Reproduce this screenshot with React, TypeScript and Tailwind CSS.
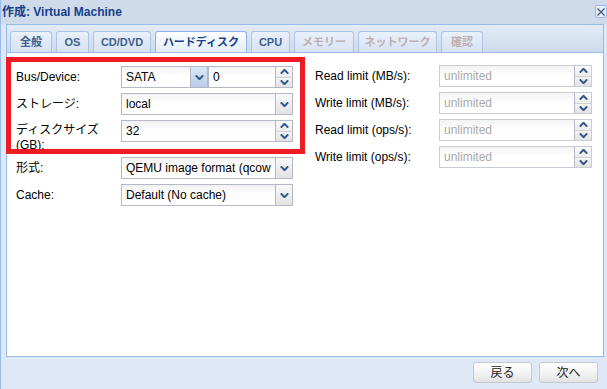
import type { ReactNode } from 'react';

const tabs = [
  { label: '全般', w: 'w-[42px]' },
  { label: 'OS', w: 'w-[33px]' },
  { label: 'CD/DVD', w: 'w-[58px]' },
  { label: 'ハードディスク', w: 'w-[92px]', active: true },
  { label: 'CPU', w: 'w-[39px]' },
  { label: 'メモリー', w: 'w-[60px]', disabled: true },
  { label: 'ネットワーク', w: 'w-[79px]', disabled: true },
  { label: '確認', w: 'w-[42px]', disabled: true },
];

const limits = ['Read limit (MB/s):', 'Write limit (MB/s):', 'Read limit (ops/s):', 'Write limit (ops/s):'];

function Chevron({ up = false }: { up?: boolean }) {
  return (
    <svg width="9" height="5" viewBox="0 0 9 5" className={up ? 'rotate-180' : ''}>
      <path d="M0.8 0.4 L4.5 4.2 L8.2 0.4" fill="none" stroke="#34548a" strokeWidth="2" />
    </svg>
  );
}

function Trigger({ hover = false }: { hover?: boolean }) {
  return (
    <div
      className={`w-[17px] shrink-0 flex items-center justify-center border-l border-[#b5b8c8] bg-gradient-to-b ${
        hover ? 'from-[#dce8f6] to-[#b7cce7]' : 'from-[#fafafa] to-[#e2e2e2]'
      }`}
    >
      <Chevron />
    </div>
  );
}

function Spin() {
  return (
    <div className="w-[17px] shrink-0 flex flex-col border-l border-[#b5b8c8]">
      <div className="flex-1 flex items-center justify-center bg-gradient-to-b from-[#fafafa] to-[#ececec] border-b border-[#d4d4d4]">
        <Chevron up />
      </div>
      <div className="flex-1 flex items-center justify-center bg-gradient-to-b from-[#f4f4f4] to-[#e2e2e2]">
        <Chevron />
      </div>
    </div>
  );
}

function Field({ children, w, muted = false, tail }: { children: ReactNode; w: string; muted?: boolean; tail: ReactNode }) {
  return (
    <div className={`${w} h-[22px] flex border ${muted ? 'border-[#c9cbd6]' : 'border-[#b5b8c8]'} bg-white shrink-0`}>
      <div
        className={`flex-1 min-w-0 overflow-hidden whitespace-nowrap pl-[4px] text-[12px] leading-[20px] bg-gradient-to-b from-[#f3f3f3] via-white to-white ${
          muted ? 'text-[#a9a9a9]' : 'text-black'
        }`}
      >
        {children}
      </div>
      {tail}
    </div>
  );
}

function Row({ label, children }: { label: ReactNode; children: ReactNode }) {
  return (
    <div className="flex items-center h-[22px] mb-[5px]">
      <div className="w-[105px] shrink-0 text-[12px] text-black">{label}</div>
      {children}
    </div>
  );
}

export default function App() {
  return (
    <div className="relative w-[607px] h-[389px] overflow-hidden bg-[#dfe8f6] border-l border-[#99bbe8] font-['Liberation_Sans','Noto_Sans_CJK_JP',sans-serif]">
      <div className="h-[24px] flex items-center justify-between pl-[1px] bg-[#cfdbea]">
        <span className="text-[12px] font-bold text-[#15428b]">作成: Virtual Machine</span>
        <div className="w-[12px] h-[13px] mb-[1px] flex items-center justify-center border border-[#99bbe8] bg-[#e6eef8] rounded-[2px]">
          <svg width="8" height="8" viewBox="0 0 8 8">
            <path d="M0.5 0.5 L7.5 7.5 M7.5 0.5 L0.5 7.5" stroke="#3b5a86" strokeWidth="1.3" />
          </svg>
        </div>
      </div>

      <div className="ml-[5px] w-[598px] h-[333px] flex flex-col border border-[#99bbe8] bg-white">
        <div className="h-[28px] shrink-0 flex items-end gap-[4px] pl-[3px] border-b border-[#99bbe8] bg-gradient-to-b from-[#e3ebf6] to-[#cedbec]">
          {tabs.map((t) => (
            <div
              key={t.label}
              className={`${t.w} h-[21px] shrink-0 flex items-center justify-center rounded-t-[3px] border border-b-0 text-[11px] font-bold ${
                t.active
                  ? 'border-[#8db2e3] bg-gradient-to-b from-white to-[#e3ecf8] text-[#15428b]'
                  : 'border-[#a9c4e6] bg-gradient-to-b from-[#e9f0f9] to-[#d6e3f3] ' +
                    (t.disabled ? 'text-[#bdb0b2]' : 'text-[#3f5f8c]')
              }`}
            >
              {t.label}
            </div>
          ))}
        </div>

        <div className="flex pt-[13px] pl-[9px]">
          <div className="w-[277px] shrink-0">
            <Row label="Bus/Device:">
              <Field w="w-[87px]" tail={<Trigger hover />}>SATA</Field>
              <Field w="w-[85px]" tail={<Spin />}>0</Field>
            </Row>
            <Row label="ストレージ:">
              <Field w="w-[172px]" tail={<Trigger />}>local</Field>
            </Row>
            <div className="flex items-start h-[32px] mb-[5px]">
              <div className="w-[105px] shrink-0 pt-[3px] text-[12px] leading-[15px] text-black">
                ディスクサイズ
                <br />
                (GB):
              </div>
              <Field w="w-[172px]" tail={<Spin />}>32</Field>
            </div>
            <Row label="形式:">
              <Field w="w-[172px]" tail={<Trigger />}>QEMU image format (qcow</Field>
            </Row>
            <Row label="Cache:">
              <Field w="w-[172px]" tail={<Trigger />}>Default (No cache)</Field>
            </Row>
          </div>

          <div className="ml-[22px] w-[277px] -mt-[1px]">
            {limits.map((l) => (
              <Row key={l} label={<span className="inline-block w-[124px]">{l}</span>}>
                <div className="ml-[19px]">
                  <Field w="w-[153px]" muted tail={<Spin />}>unlimited</Field>
                </div>
              </Row>
            ))}
          </div>
        </div>
      </div>

      <div className="mt-[5px] flex justify-end gap-[7px] pr-[9px]">
        {['戻る', '次へ'].map((b) => (
          <div
            key={b}
            className="w-[59px] h-[21px] flex items-center justify-center rounded-[3px] border border-[#c8c8c8] bg-gradient-to-b from-white via-[#f4f4f4] to-[#e2e2e2] text-[12px] text-[#222]"
          >
            {b}
          </div>
        ))}
      </div>

      <div className="absolute left-[5px] top-[57px] w-[299px] h-[97px] border-[5px] border-[#ed1c24]" />
    </div>
  );
}
